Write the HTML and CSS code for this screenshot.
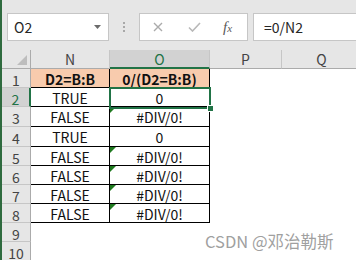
FILE: index.html
```html
<!DOCTYPE html>
<html>
<head>
	<link rel="stylesheet" href="styles.css">
	<title>Sheet</title>
</head>
<body>
	<div class="app">
		<div class="formula-bar">
			<div class="name-box">
				<span>O2</span>
				<svg class="drop" width="7" height="4" viewBox="0 0 7 4"><polygon points="0,0 7,0 3.5,4" fill="#6b6b6b"/></svg>
			</div>
			<div class="grip">
				<svg width="2" height="10" viewBox="0 0 2 10"><rect x="0" y="0" width="2" height="2" fill="#a8a8a8"/><rect x="0" y="4" width="2" height="2" fill="#a8a8a8"/><rect x="0" y="8" width="2" height="2" fill="#a8a8a8"/></svg>
			</div>
			<div class="tools">
				<svg class="cancel" width="10" height="10" viewBox="0 0 10 10"><path d="M1 1L9 9M9 1L1 9" stroke="#ababab" stroke-width="1.4" fill="none"/></svg>
				<svg class="enter" width="13" height="10" viewBox="0 0 13 10"><path d="M1 5.5L4.5 9L12 1" stroke="#b8b8b8" stroke-width="1.6" fill="none"/></svg>
				<span class="fx">f<span class="x">x</span></span>
			</div>
			<div class="formula">=0/N2</div>
		</div>

		<div class="sheet">
			<div class="corner"><span class="tri"></span></div>
			<div class="ch">N</div>
			<div class="ch sel">O</div>
			<div class="ch">P</div>
			<div class="ch">Q</div>

			<div class="rh">1</div>
			<div class="c d head">D2=B:B</div>
			<div class="c d head">0/(D2=B:B)</div>
			<div class="c"></div><div class="c"></div>

			<div class="rh sel">2</div>
			<div class="c d">TRUE</div>
			<div class="c d">0</div>
			<div class="c"></div><div class="c"></div>

			<div class="rh">3</div>
			<div class="c d">FALSE</div>
			<div class="c d err">#DIV/0!</div>
			<div class="c"></div><div class="c"></div>

			<div class="rh">4</div>
			<div class="c d">TRUE</div>
			<div class="c d">0</div>
			<div class="c"></div><div class="c"></div>

			<div class="rh">5</div>
			<div class="c d">FALSE</div>
			<div class="c d err">#DIV/0!</div>
			<div class="c"></div><div class="c"></div>

			<div class="rh">6</div>
			<div class="c d">FALSE</div>
			<div class="c d err">#DIV/0!</div>
			<div class="c"></div><div class="c"></div>

			<div class="rh">7</div>
			<div class="c d">FALSE</div>
			<div class="c d err">#DIV/0!</div>
			<div class="c"></div><div class="c"></div>

			<div class="rh">8</div>
			<div class="c d">FALSE</div>
			<div class="c d err">#DIV/0!</div>
			<div class="c"></div><div class="c"></div>

			<div class="rh">9</div>
			<div class="c"></div><div class="c"></div><div class="c"></div><div class="c"></div>

			<div class="rh">10</div>
			<div class="c"></div><div class="c"></div><div class="c"></div><div class="c"></div>

			<div class="selection"><span class="handle"></span></div>
		</div>

		<div class="watermark">CSDN @邓治勒斯</div>
	</div>
</body>
</html>
```

FILE: styles.css
```css
html, body {
	margin: 0;
	width: 356px;
	height: 260px;
	overflow: hidden;
	background: #fff;
}
.app {
	position: relative;
	height: 260px;
	border-left: 2px solid #2f6b3f;
	font-family: "Noto Sans CJK SC", sans-serif;
}

/* formula bar */
.formula-bar {
	display: flex;
	height: 50px;
	box-sizing: border-box;
	padding: 13px 0 0 5px;
	background: #e6e6e6;
}
.name-box {
	width: 102px;
	height: 28px;
	box-sizing: border-box;
	border: 1px solid #c6c6c6;
	background: #fff;
	display: flex;
	align-items: center;
	justify-content: space-between;
	padding: 0 7px 0 6px;
	font-size: 14px;
	color: #262626;
}
.grip {
	width: 30px;
	height: 28px;
	display: flex;
	align-items: center;
	justify-content: center;
}
.tools {
	width: 109px;
	height: 28px;
	box-sizing: border-box;
	border: 1px solid #c6c6c6;
	background: #fff;
	display: flex;
	align-items: center;
	padding-left: 13px;
}
.tools .enter {
	margin-left: 25px;
}
.fx {
	margin-left: 22px;
	font-family: "Liberation Serif", serif;
	font-style: italic;
	font-size: 15px;
	color: #5a5a5a;
}
.fx .x {
	font-size: 11px;
}
.formula {
	flex: 1;
	margin-left: 5px;
	margin-right: -2px;
	height: 28px;
	box-sizing: border-box;
	border: 1px solid #c6c6c6;
	background: #fff;
	padding-left: 10px;
	font-size: 14px;
	line-height: 26px;
	color: #262626;
}

/* grid */
.sheet {
	position: relative;
	display: grid;
	grid-template-columns: 29px 79px 100px 72px 80px;
	grid-template-rows: 19px 19px 19px 20px 20px 19px 19px 19px 19px 19px 19px;
	font-size: 14px;
	color: #111;
}
.sheet > div {
	box-sizing: border-box;
}
.corner {
	background: #e6e6e6;
	border-right: 1px solid #ababab;
	border-bottom: 1px solid #ababab;
	position: relative;
}
.corner .tri {
	position: absolute;
	right: 3px;
	bottom: 3px;
	width: 10px;
	height: 10px;
	background: #bdbdbd;
	clip-path: polygon(100% 0, 100% 100%, 0 100%);
}
.ch {
	background: #e6e6e6;
	border-right: 1px solid #c6c6c6;
	border-bottom: 1px solid #ababab;
	text-align: center;
	line-height: 18px;
	color: #444;
}
.ch.sel {
	background: #d2d2d2;
	border-bottom: 2px solid #217346;
	color: #217346;
}
.rh {
	background: #e6e6e6;
	border-right: 1px solid #ababab;
	border-bottom: 1px solid #c6c6c6;
	text-align: center;
	line-height: 20px;
	padding-top: 1px;
	color: #444;
}
.rh.sel {
	background: #d2d2d2;
	border-right: 2px solid #217346;
	color: #217346;
}
.c {
	background: #fff;
}
.d {
	position: relative;
	border-right: 1px solid #000;
	border-bottom: 1px solid #000;
	text-align: center;
	line-height: 19px;
	padding-top: 1px;
}
.head {
	background: #f8cbad;
	font-weight: bold;
}
.err::before {
	content: "";
	position: absolute;
	left: 0;
	top: 0;
	width: 6px;
	height: 6px;
	background: #1f7a1f;
	clip-path: polygon(0 0, 100% 0, 0 100%);
}
.selection {
	position: absolute;
	left: 107px;
	top: 37px;
	width: 102px;
	height: 22px;
	box-sizing: border-box;
	border: 2px solid #217346;
}
.handle {
	position: absolute;
	right: -5px;
	bottom: -5px;
	width: 5px;
	height: 5px;
	background: #217346;
	border: 1px solid #fff;
}

.watermark {
	position: absolute;
	left: 203px;
	top: 229px;
	font-size: 16.5px;
	color: #a0a0a0;
	white-space: nowrap;
}
```
